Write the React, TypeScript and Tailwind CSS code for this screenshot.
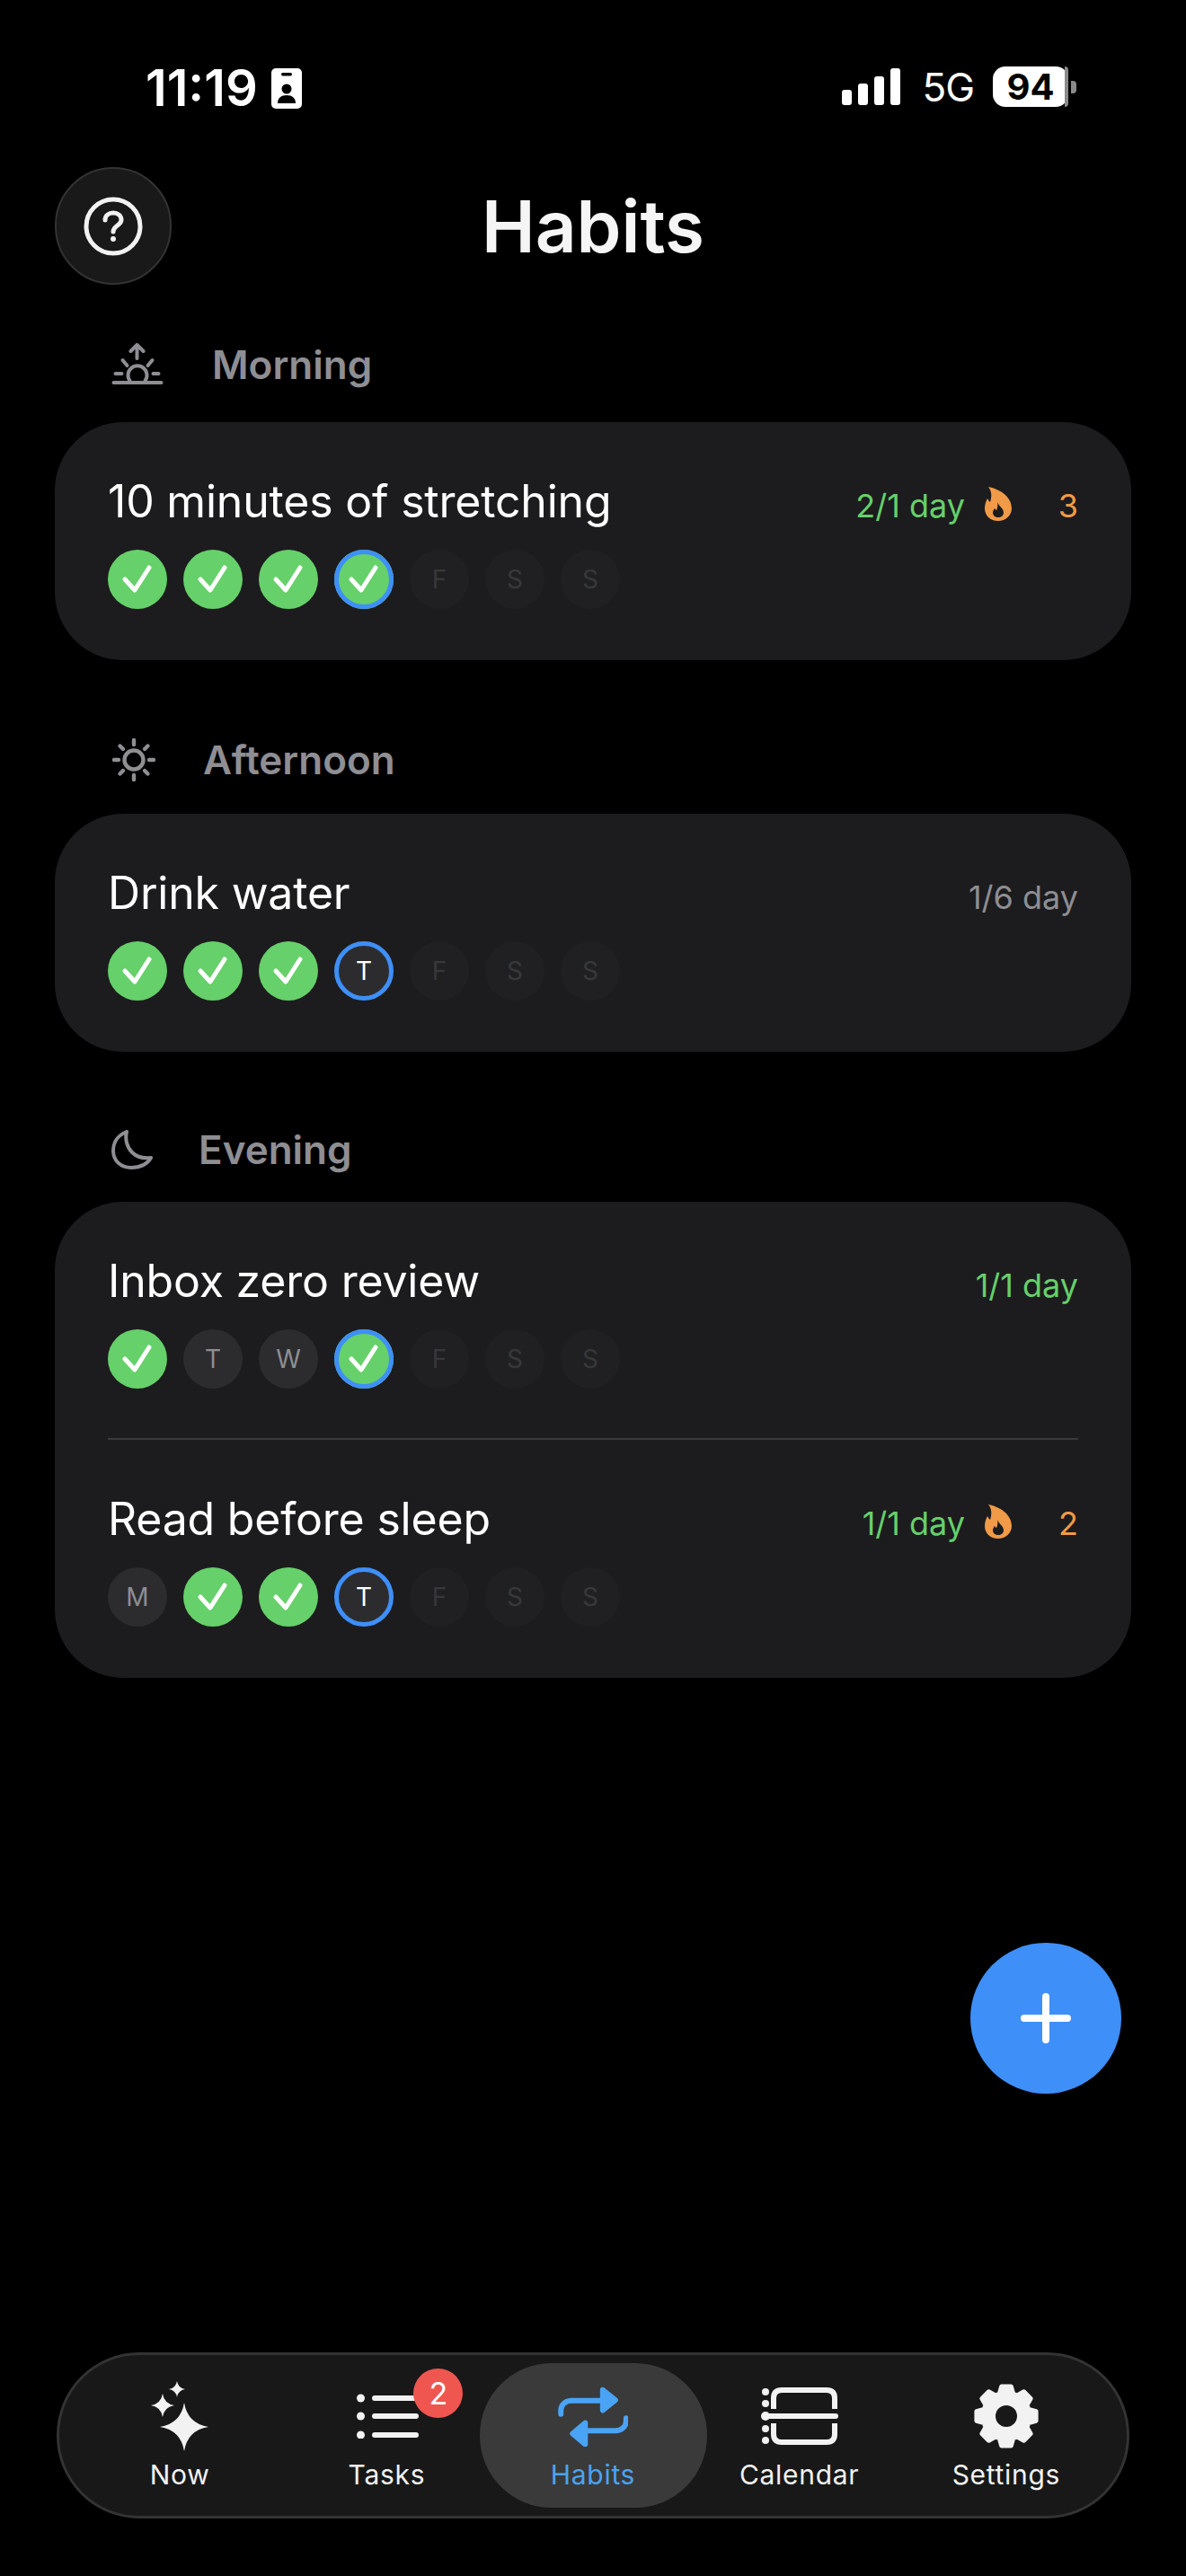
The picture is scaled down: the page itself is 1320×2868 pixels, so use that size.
import React from 'react';

const FONT = "font-['Inter','Noto_Sans',sans-serif]";

type Day = { l: string; s: 'done' | 'missed' | 'future' | 'today' | 'todayDone' };

const week = (a: string): Day[] => {
    const letters = ['M', 'T', 'W', 'T', 'F', 'S', 'S'];
    return letters.map((l, i) => {
        const c = a[i];
        if (c === 'x') return { l, s: 'done' };
        if (c === 'o') return { l, s: 'missed' };
        if (c === 'D') return { l, s: 'todayDone' };
        if (c === 'N') return { l, s: 'today' };
        return { l, s: 'future' };
    });
};

const Check = () => (
    <svg width="66" height="66" viewBox="0 0 66 66" fill="none">
        <path d="M19 33 L30 45 L46 20" stroke="#fff" strokeWidth="5" strokeLinecap="round" strokeLinejoin="round" />
    </svg>
);

const DayDot = ({ d }: { d: Day }) => {
    if (d.s === 'done')
        return <div className="w-[66px] h-[66px] rounded-full bg-[#66d06a] shrink-0"><Check /></div>;
    if (d.s === 'todayDone')
        return (
            <div className="w-[66px] h-[66px] rounded-full bg-[#66d06a] shrink-0 relative">
                <Check />
                <div className="absolute inset-0 rounded-full border-[5px] border-[#3e8ff8]" />
            </div>
        );
    if (d.s === 'today')
        return (
            <div className="w-[66px] h-[66px] rounded-full bg-[#2c2c2e] border-[5px] border-[#3e8ff8] flex items-center justify-center text-[28px] text-white shrink-0">
                {d.l}
            </div>
        );
    if (d.s === 'missed')
        return (
            <div className="w-[66px] h-[66px] rounded-full bg-[#2c2c2e] flex items-center justify-center text-[28px] text-[#8e8e93] shrink-0">
                {d.l}
            </div>
        );
    return (
        <div className="w-[66px] h-[66px] rounded-full bg-[#202022] flex items-center justify-center text-[28px] text-[#38383a] shrink-0">
            {d.l}
        </div>
    );
};

const Flame = () => (
    <svg width="30" height="38" viewBox="0 0 30 38" className="shrink-0">
        <path
            fillRule="evenodd"
            fill="#f19a47"
            d="M4 0 C15 2 30 10 30 24 C30 32 23 38 15 38 C6 38 0 32 0 24 C0 20 1 17 3 13 C4 15 5 16 6 17 C8 11 8 5 4 0 Z M14 17 C16 22 21 24 21 29 C21 32 18 34 15 34 C12 34 9 32 9 29 C9 27 10 25 11 24 C12 25 12 26 13 26 C14 24 15 21 14 17 Z"
        />
    </svg>
);

const HabitRow = ({ title, stat, statColor, streak, days, divided }: { title: string; stat: string; statColor: string; streak?: number; days: string; divided?: boolean }) => (
    <div className={`h-[265px] pt-[58px] ${divided ? 'border-b-[2px] border-[#3a3a3c]' : ''}`}>
        <div className="flex justify-between h-[60px]">
            <div className="text-[50px] leading-[60px] text-white tracking-[-0.2px]">{title}</div>
            <div className="flex items-center h-[60px] mt-[5px]">
                <span className={`text-[36px] ${statColor}`}>{stat}</span>
                {streak !== undefined && (
                    <>
                        <span className="ml-[22px] -mt-[4px]"><Flame /></span>
                        <span className="w-[74px] text-right text-[36px] text-[#f19a47]">{streak}</span>
                    </>
                )}
            </div>
        </div>
        <div className="flex gap-[18px] mt-[24px]">
            {week(days).map((d, i) => <DayDot key={i} d={d} />)}
        </div>
    </div>
);

const Card = ({ children }: { children: React.ReactNode }) => (
    <div className="mx-[61px] px-[59px] bg-[#1c1c1e] rounded-[76px]">{children}</div>
);

const Section = ({ icon, label, gap, height, mb }: { icon: React.ReactNode; label: string; gap: string; height: string; mb: string }) => (
    <div className={`flex items-center pl-[124px] ${gap} ${height} ${mb}`}>
        {icon}
        <span className="text-[44px] font-semibold text-[#8e8e93] leading-none">{label}</span>
    </div>
);

const SunriseIcon = () => (
    <svg width="58" height="48" viewBox="15 8 57 48" fill="none" stroke="#8e8e93" strokeWidth="4" strokeLinecap="round" strokeLinejoin="round">
        <path d="M43 25 V10 M36 17 L43 10 L50 17" />
        <path d="M27 27 L32 33 M60 27 L55 33 M19 42 H26 M61 42 H67" />
        <path d="M35 50 A10.5 10.5 0 1 1 52 50" />
        <path d="M17 52 H70" />
    </svg>
);

const SunIcon = () => (
    <svg width="50" height="50" viewBox="14 11 50 50" fill="none" stroke="#8e8e93" strokeWidth="4.4" strokeLinecap="round">
        <circle cx="39" cy="36" r="10.5" />
        <path d="M39 14 V19 M39 53 V58 M17 36 H22 M56 36 H61 M23.5 20.5 L27 24 M51 48 L54.5 51.5 M54.5 20.5 L51 24 M27 48 L23.5 51.5" />
    </svg>
);

const MoonIcon = () => (
    <svg width="46" height="44" viewBox="0 0 46 44" fill="none" stroke="#8e8e93" strokeWidth="4" strokeLinejoin="round">
        <path d="M17 2 C7 6 2 14 2 23 C2 34 10 42 22 42 C32 42 40 38 44 31 C36 32 28 30 23 25 C17 19 15 10 17 2 Z" />
    </svg>
);

const star = (cx: number, cy: number, rx: number, ry: number, k = 0.14) => {
    const a = rx * k;
    const b = ry * k;
    return `M${cx} ${cy - ry} Q${cx + a} ${cy - b} ${cx + rx} ${cy} Q${cx + a} ${cy + b} ${cx} ${cy + ry} Q${cx - a} ${cy + b} ${cx - rx} ${cy} Q${cx - a} ${cy - b} ${cx} ${cy - ry} Z`;
};

const NowIcon = () => (
    <svg width="64" height="78" viewBox="0 0 64 78" fill="#f2f2f2">
        <path d={star(37, 51, 27, 27)} />
        <path d={star(13, 27, 13, 13)} />
        <path d={star(29, 9, 9, 9)} />
    </svg>
);

const TasksIcon = () => (
    <svg width="70" height="50" viewBox="0 0 70 50" fill="#f2f2f2" className="ml-[4px]">
        {[5, 25, 46].map((y) => (
            <g key={y}>
                <circle cx="4.5" cy={y} r="4.5" />
                <rect x="17" y={y - 3} width="52" height="6" rx="3" />
            </g>
        ))}
    </svg>
);

const HabitsIcon = () => (
    <svg width="78" height="68" viewBox="13 14 72 62" fill="none" stroke="#4aa3f5" strokeWidth="5.5" strokeLinecap="round" strokeLinejoin="round">
        <path d="M16 43 V39 C16 33 21 29 27 29 H60" />
        <path d="M59 18 L72 28.5 L59 39 Z" fill="#4aa3f5" />
        <path d="M83 47 V50 C83 56 78 60 72 60 H40" />
        <path d="M41 52 L28 63 L41 74 Z" fill="#4aa3f5" />
    </svg>
);

const CalendarIcon = () => (
    <svg width="86" height="64" viewBox="0 0 86 64" fill="none" stroke="#f2f2f2" strokeWidth="6" strokeLinecap="round">
        <path d="M14 24 V12 C14 6 17 3 23 3 L73 3 C79 3 82 6 82 12 V24" strokeLinecap="butt" />
        <path d="M14 40 V52 C14 58 17 61 23 61 L73 61 C79 61 82 58 82 52 V40" strokeLinecap="butt" />
        <path d="M5 32 H83" />
        <g fill="#f2f2f2" stroke="none">
            <circle cx="5" cy="5" r="4" />
            <circle cx="5" cy="18" r="4" />
            <circle cx="5" cy="32" r="5" />
            <circle cx="5" cy="46" r="4" />
            <circle cx="5" cy="59" r="4" />
        </g>
    </svg>
);

const gearPath = () => {
    const cx = 36;
    const cy = 36;
    const pts: string[] = [];
    for (let i = 0; i < 8; i++) {
        const t = (i * Math.PI) / 4 - Math.PI / 2;
        const p = (r: number, o: number) => `${(cx + r * Math.cos(t + o)).toFixed(1)} ${(cy + r * Math.sin(t + o)).toFixed(1)}`;
        pts.push(p(26, -0.3), p(33.5, -0.16), p(33.5, 0.16), p(26, 0.3));
    }
    return `M${pts.join(' L')} Z`;
};

const SettingsIcon = () => (
    <svg width="72" height="72" viewBox="0 0 72 72">
        <path d={gearPath()} fill="#f2f2f2" stroke="#f2f2f2" strokeWidth="5" strokeLinejoin="round" />
        <circle cx="36" cy="36" r="12" fill="#181818" />
    </svg>
);

const NavItem = ({ icon, label, active, badge }: { icon: React.ReactNode; label: string; active?: boolean; badge?: number }) => (
    <div className={`relative flex-1 flex flex-col items-center ${active ? 'bg-[#3a3a3a] rounded-[80px] h-[161px] w-[253px] flex-none -mx-[12px] z-0' : 'h-[161px]'}`}>
        <div className="h-[106px] flex items-center justify-center pt-[12px]">{icon}</div>
        <div className={`text-[30px] leading-[36px] font-normal tracking-[0.7px] ${active ? 'text-[#4aa3f5] font-medium' : 'text-[#f2f2f2]'}`}>{label}</div>
        {badge !== undefined && (
            <div className="absolute top-[6px] left-[145px] w-[55px] h-[55px] rounded-full bg-[#ef5650] flex items-center justify-center text-[34px] text-white">
                {badge}
            </div>
        )}
    </div>
);

export default function App() {
    return (
        <div className={`${FONT} relative bg-black w-[1320px] h-[2868px] overflow-hidden flex flex-col`}>
            {/* status bar */}
            <div className="h-[186px] shrink-0 flex justify-between items-start text-white">
                <div className="flex items-center ml-[162px] mt-[70px] h-[56px]">
                    <span className="text-[56px] font-semibold leading-none">11:19</span>
                    <svg width="34" height="45" viewBox="0 0 34 45" className="ml-[15px] mt-[1px]">
                        <rect width="34" height="45" rx="5" fill="#fff" />
                        <rect x="11" y="5" width="12" height="3.5" rx="1.7" fill="#000" />
                        <circle cx="17" cy="23" r="5.5" fill="#000" />
                        <path d="M7 39 C7 33 11 30 17 30 C23 30 27 33 27 39 Z" fill="#000" />
                    </svg>
                </div>
                <div className="flex items-center mr-[122px] mt-[74px] h-[45px]">
                    <div className="flex items-end gap-[7px] h-[41px]">
                        <div className="w-[11px] h-[17px] rounded-[3px] bg-white" />
                        <div className="w-[11px] h-[24px] rounded-[3px] bg-white" />
                        <div className="w-[11px] h-[32px] rounded-[3px] bg-white" />
                        <div className="w-[11px] h-[41px] rounded-[3px] bg-white" />
                    </div>
                    <span className="ml-[24px] text-[44px] leading-none tracking-[-1px] font-normal">5G</span>
                    <div className="ml-[21px] relative w-[84px] h-[45px] rounded-[14px] bg-white flex items-center justify-center">
                        <div className="absolute right-0 top-0 bottom-0 w-[4px] bg-[#8a8a8a] rounded-r-[14px]" />
                        <span className="text-[40px] font-bold text-black leading-none">94</span>
                    </div>
                    <div className="ml-[3px] w-[6px] h-[14px] rounded-r-[4px] bg-[#8a8a8a]" />
                </div>
            </div>

            {/* header */}
            <div className="relative h-[131px] shrink-0 flex items-center justify-center">
                <div className="absolute left-[61px] top-0 w-[130px] h-[131px] rounded-full bg-[#191919] border-[2px] border-[#333] flex items-center justify-center">
                    <svg width="66" height="66" viewBox="0 0 66 66" fill="none" stroke="#f2f2f2" strokeLinecap="round">
                        <circle cx="33" cy="33" r="30" strokeWidth="5" />
                        <path d="M24 26 C24 21 28 18 33 18 C38 18 42 21 42 26 C42 32 33 32 33 39" strokeWidth="5" />
                        <circle cx="33" cy="47" r="3" fill="#f2f2f2" stroke="none" />
                    </svg>
                </div>
                <h1 className="text-[80px] font-semibold text-[#f5f5f5] leading-none">Habits</h1>
            </div>

            {/* morning */}
            <Section icon={<SunriseIcon />} label="Morning" gap="gap-[54px]" height="h-[60px] mt-[59px]" mb="mb-[34px]" />
            <Card>
                <HabitRow title="10 minutes of stretching" stat="2/1 day" statColor="text-[#66d06a]" streak={3} days="xxxD---" />
            </Card>

            {/* afternoon */}
            <Section icon={<SunIcon />} label="Afternoon" gap="gap-[52px]" height="h-[60px] mt-[81px]" mb="mb-[30px]" />
            <Card>
                <HabitRow title="Drink water" stat="1/6 day" statColor="text-[#8e8e93]" days="xxxN---" />
            </Card>

            {/* evening */}
            <Section icon={<MoonIcon />} label="Evening" gap="gap-[51px]" height="h-[60px] mt-[79px]" mb="mb-[28px]" />
            <Card>
                <HabitRow title="Inbox zero review" stat="1/1 day" statColor="text-[#66d06a]" days="xooD---" divided />
                <HabitRow title="Read before sleep" stat="1/1 day" statColor="text-[#66d06a]" streak={2} days="oxxN---" />
            </Card>

            {/* add button */}
            <div className="absolute left-[1080px] top-[2163px] w-[168px] h-[168px] rounded-full bg-[#3e8ff8] flex items-center justify-center">
                <svg width="56" height="56" viewBox="0 0 56 56" stroke="#fff" strokeWidth="8" strokeLinecap="round">
                    <path d="M28 4 V52 M4 28 H52" />
                </svg>
            </div>

            {/* tab bar */}
            <div className="mt-auto mb-[64px] mx-[63px] h-[185px] rounded-[92px] bg-[#181818] border-[3px] border-[#333] flex items-center px-[19px]">
                <NavItem icon={<NowIcon />} label="Now" />
                <NavItem icon={<TasksIcon />} label="Tasks" badge={2} />
                <NavItem icon={<HabitsIcon />} label="Habits" active />
                <NavItem icon={<CalendarIcon />} label="Calendar" />
                <NavItem icon={<SettingsIcon />} label="Settings" />
            </div>
        </div>
    );
}
